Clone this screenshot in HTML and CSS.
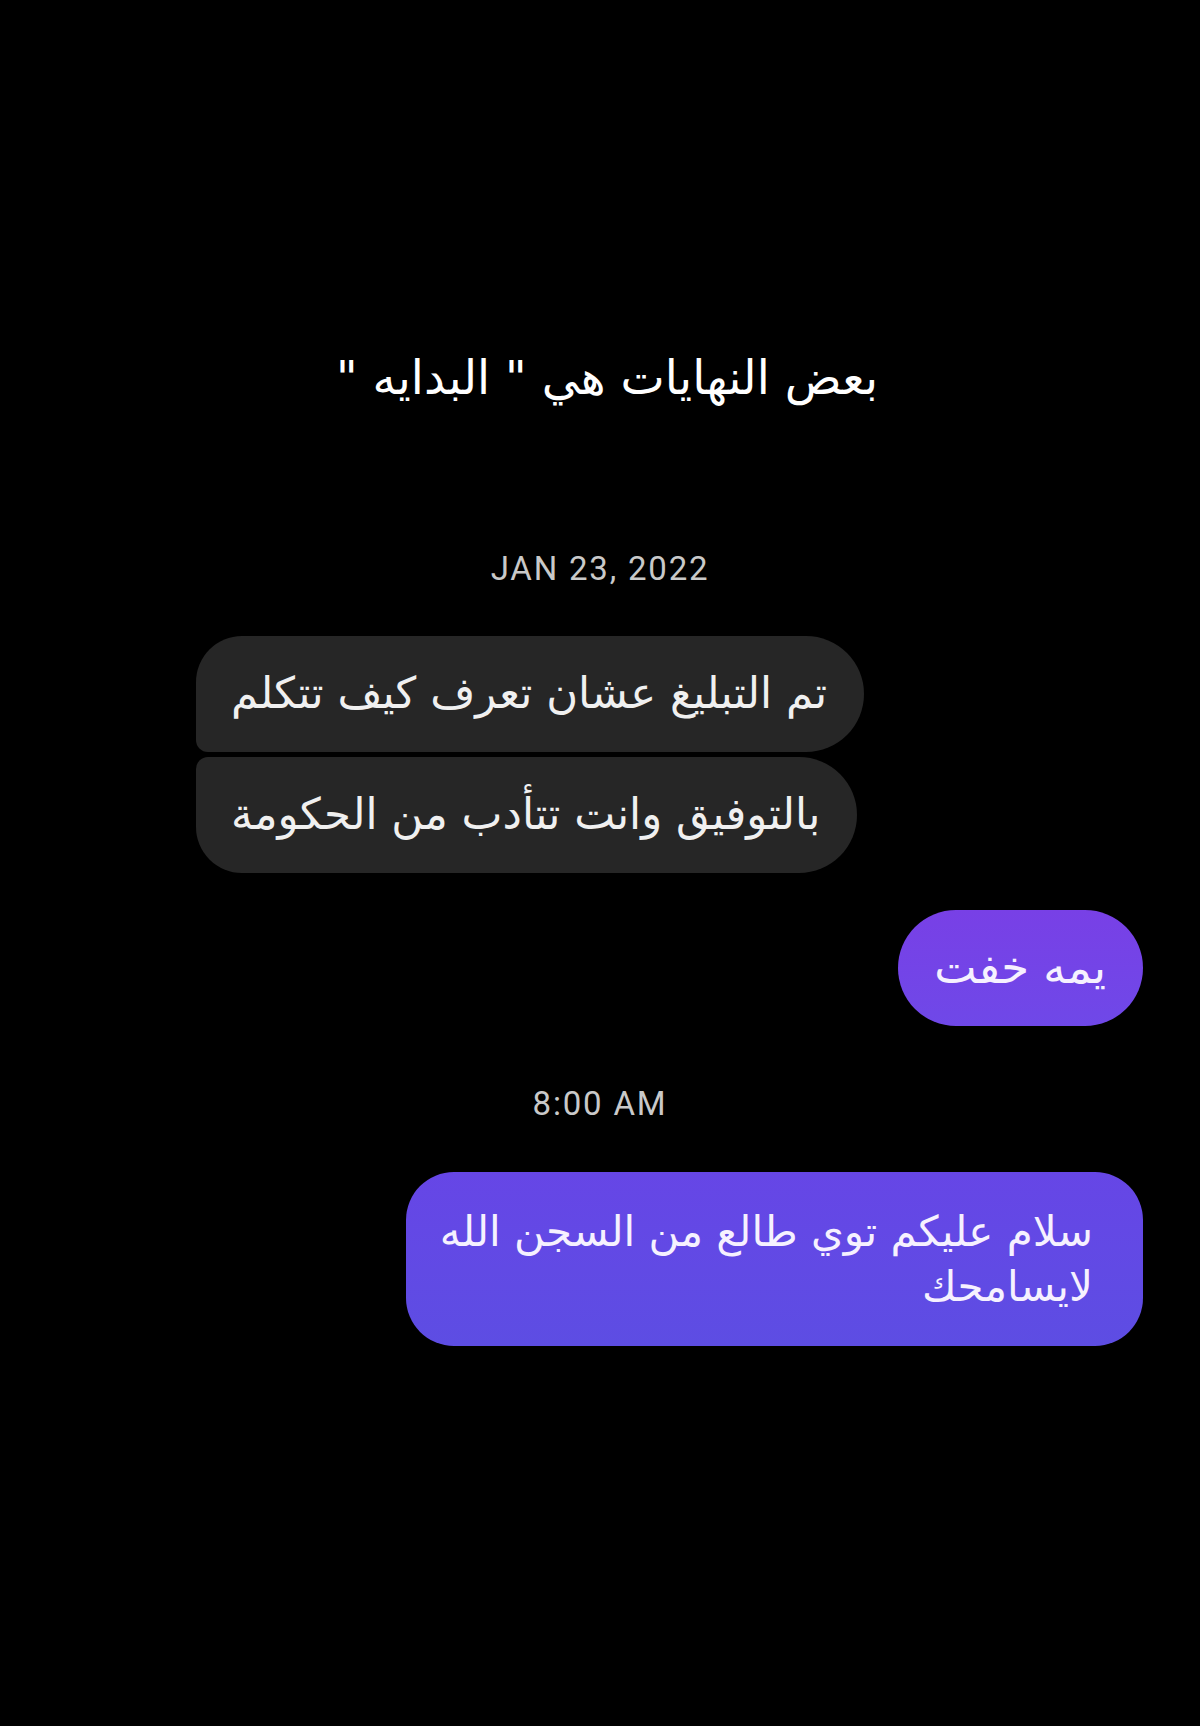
FILE: index.html
```html
<!DOCTYPE html>
<html lang="ar">
<head>
<meta charset="utf-8">
<title>Chat</title>
<link rel="stylesheet" href="styles.css">
</head>
<body>
<main class="screen">
  <h1 class="caption" dir="rtl">بعض النهايات هي " البدايه "</h1>
  <div class="stamp stamp-date">JAN 23, 2022</div>
  <div class="group group-in">
    <div class="bubble bubble-in first" dir="rtl">تم التبليغ عشان تعرف كيف تتكلم</div>
    <div class="bubble bubble-in last" dir="rtl">بالتوفيق وانت تتأدب من الحكومة</div>
  </div>
  <div class="group group-out group-short">
    <div class="bubble bubble-out pill" dir="rtl">يمه خفت</div>
  </div>
  <div class="stamp stamp-time">8:00 AM</div>
  <div class="group group-out group-long">
    <div class="bubble bubble-out multi" dir="rtl">سلام عليكم توي طالع من السجن الله<br>لايسامحك</div>
  </div>
</main>
</body>
</html>
```

FILE: styles.css
```css
html, body {
  margin: 0;
  padding: 0;
  background: #000;
}

.screen {
  width: 1200px;
  height: 1726px;
  display: flex;
  flex-direction: column;
  background: #000;
  font-family: "DejaVu Sans", sans-serif;
  color: #f2f2f2;
}

.caption {
  margin: 348px 0 0 0;
  padding-left: 14px;
  height: 60px;
  line-height: 60px;
  font-size: 47px;
  font-weight: normal;
  text-align: center;
  color: #ffffff;
}

.stamp {
  font-family: Roboto, "Liberation Sans", sans-serif;
  font-size: 33px;
  letter-spacing: 1.8px;
  line-height: 40px;
  color: #c9c9c9;
  text-align: center;
}

.stamp-date {
  margin-top: 141px;
}

.stamp-time {
  margin-top: 58px;
}

.group {
  display: flex;
  flex-direction: column;
  gap: 5px;
}

.group-in {
  align-items: flex-start;
  padding-left: 196px;
  margin-top: 47px;
}

.group-out {
  align-items: flex-end;
  padding-right: 57px;
}

.group-short {
  margin-top: 37px;
}

.group-long {
  margin-top: 48px;
}

.bubble {
  font-size: 43.5px;
  line-height: 55px;
  padding: 30px 37px 31px 35px;
  text-align: right;
  white-space: nowrap;
}

.bubble-in {
  background: #262626;
  color: #f0f0f0;
}

.bubble-in.first {
  border-radius: 46px 58px 58px 12px;
}

.bubble-in.last {
  border-radius: 12px 58px 58px 46px;
}

.bubble-out {
  color: #f6f1ff;
}

.pill {
  font-size: 45px;
  border-radius: 58px;
  background: linear-gradient(180deg, #7840e6 0%, #6f48e8 100%);
  padding-left: 36px;
  padding-right: 37px;
}

.multi {
  font-size: 42px;
  border-radius: 48px;
  padding: 32px 50px 32px 34px;
  background: linear-gradient(180deg, #6646e6 0%, #5d4de3 100%);
}
```
